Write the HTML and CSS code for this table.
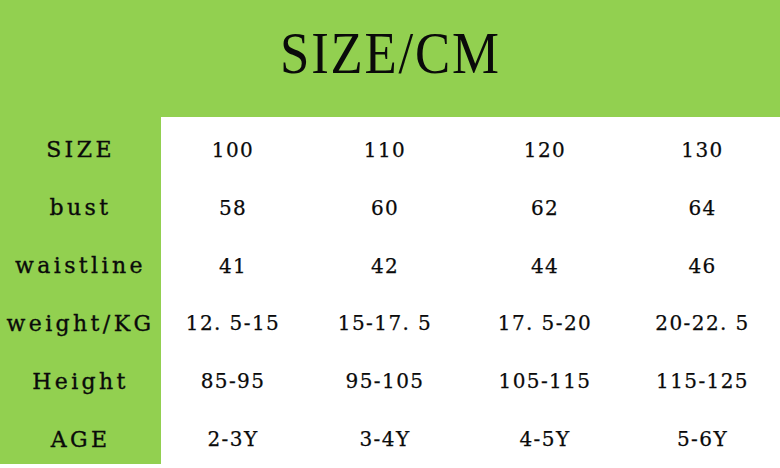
FILE: index.html
```html
<!DOCTYPE html>
<html>
<head>
<meta charset="utf-8">
<link rel="stylesheet" href="styles.css">
</head>
<body>
<div class="chart">
  <header class="head"><h1 class="title">SIZE/CM</h1></header>
  <div class="table">
    <div class="label">SIZE</div><div class="cell">100</div><div class="cell">110</div><div class="cell">120</div><div class="cell">130</div>
    <div class="label">bust</div><div class="cell">58</div><div class="cell">60</div><div class="cell">62</div><div class="cell">64</div>
    <div class="label">waistline</div><div class="cell">41</div><div class="cell">42</div><div class="cell">44</div><div class="cell">46</div>
    <div class="label">weight/KG</div><div class="cell">12. 5-15</div><div class="cell">15-17. 5</div><div class="cell">17. 5-20</div><div class="cell">20-22. 5</div>
    <div class="label">Height</div><div class="cell">85-95</div><div class="cell">95-105</div><div class="cell">105-115</div><div class="cell">115-125</div>
    <div class="label">AGE</div><div class="cell">2-3Y</div><div class="cell">3-4Y</div><div class="cell">4-5Y</div><div class="cell">5-6Y</div>
  </div>
</div>
</body>
</html>
```
FILE: styles.css
```css
html, body {
  margin: 0;
  padding: 0;
  background: #ffffff;
}
.chart {
  width: 780px;
  height: 468px;
  font-family: "DejaVu Serif", "Liberation Serif", serif;
  color: #0a0a0a;
}
.head {
  height: 117px;
  background: #92d050;
  display: flex;
  align-items: center;
  justify-content: center;
}
.title {
  margin: 0 0 12px 0;
  font-family: "Liberation Serif", serif;
  font-size: 60px;
  font-weight: normal;
  line-height: 1;
  display: inline-block;
  letter-spacing: 2px;
  transform: scaleX(0.88);
}
.table {
  display: grid;
  grid-template-columns: 161px 144px 160px 160px 1fr;
  grid-template-rows: repeat(6, 1fr);
  height: 347px;
}
.label {
  background: #92d050;
  display: flex;
  align-items: center;
  justify-content: center;
  font-size: 22px;
  letter-spacing: 3.4px;
  padding-top: 8px;
  -webkit-text-stroke: 0.35px #0a0a0a;
}
.cell {
  display: flex;
  align-items: center;
  justify-content: center;
  font-size: 20px;
  letter-spacing: 1.4px;
  white-space: pre;
  padding-top: 8px;
  -webkit-text-stroke: 0.25px #0a0a0a;
}
```
